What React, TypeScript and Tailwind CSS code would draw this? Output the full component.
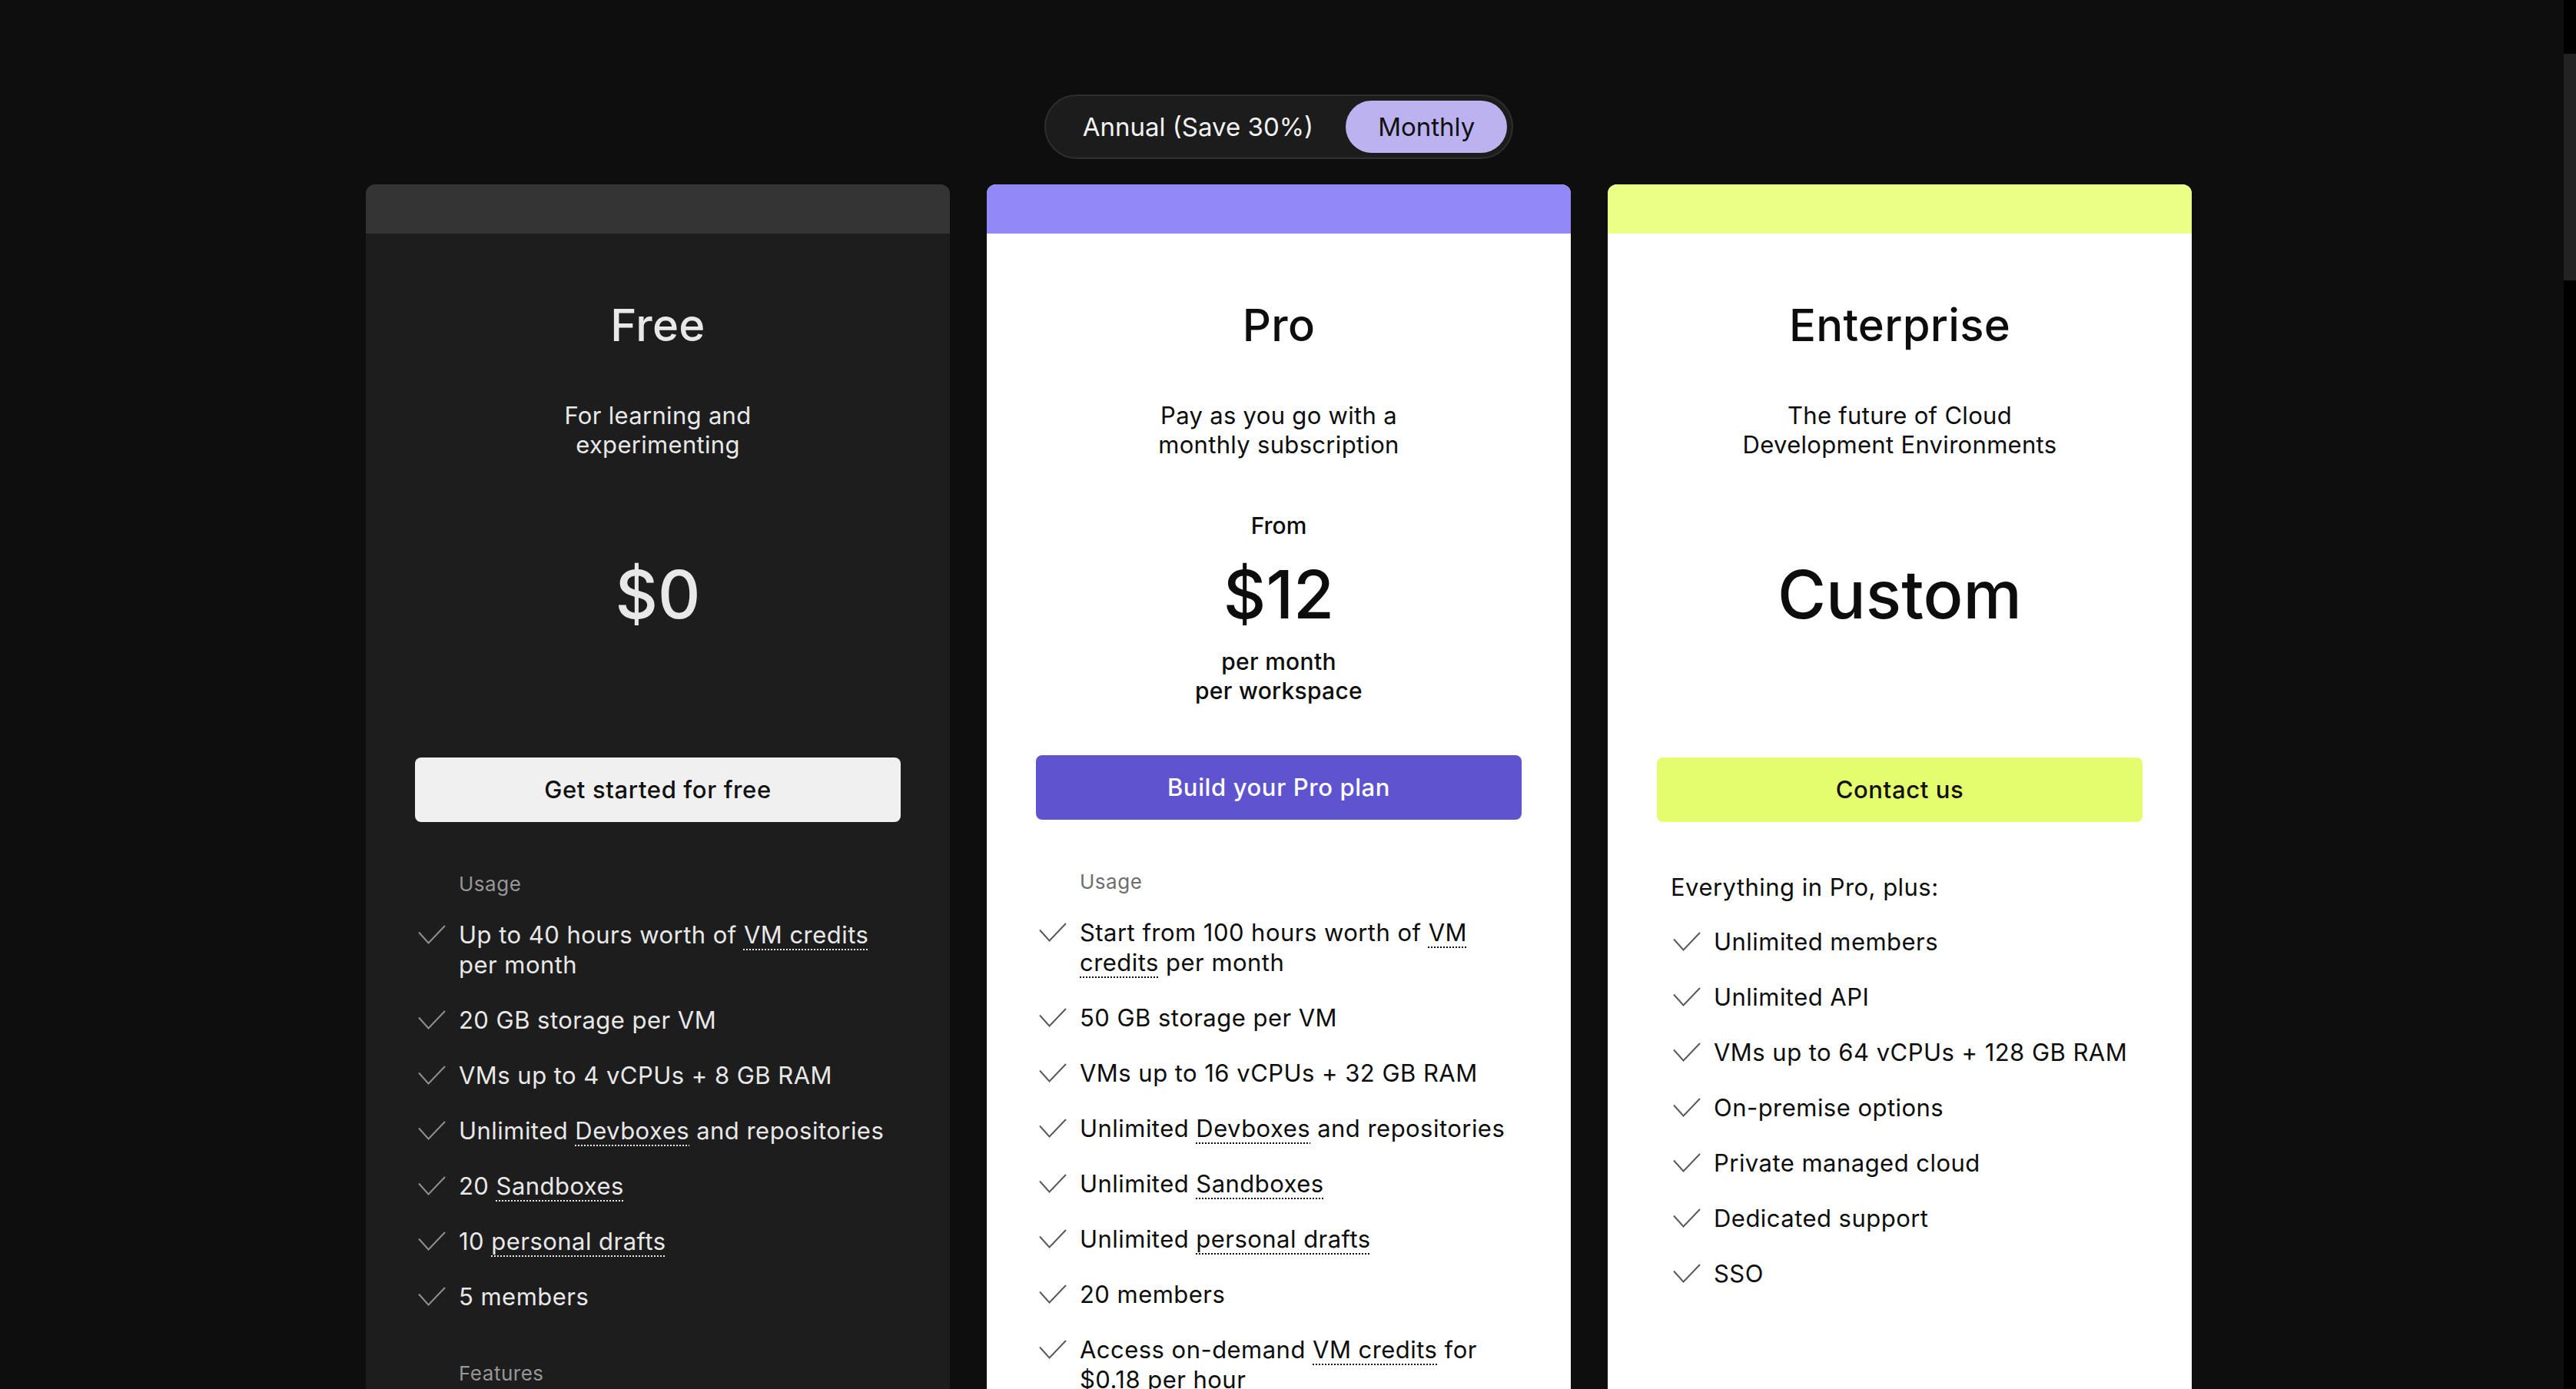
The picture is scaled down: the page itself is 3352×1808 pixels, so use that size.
import React from 'react';

type Tone = 'dark' | 'light';

const Check: React.FC<{ tone: Tone }> = ({ tone }) => (
  <svg
    viewBox="0 0 36 25"
    fill="none"
    className={`w-[36px] h-[25px] shrink-0 ${tone === 'dark' ? 'text-[#8f8f8f]' : 'text-[#5a5a5a]'}`}
  >
    <path d="M1 9.5 L13.5 23.5 L35 1" stroke="currentColor" strokeWidth={2} strokeLinejoin="miter" />
  </svg>
);

const Term: React.FC<{ children: React.ReactNode }> = ({ children }) => (
  <span className="underline decoration-dotted decoration-[2px] underline-offset-[7px]">{children}</span>
);

const Item: React.FC<{ tone: Tone; children: React.ReactNode }> = ({ tone, children }) => (
  <li className="flex gap-[17px]">
    <span className="h-[39px] flex items-center">
      <Check tone={tone} />
    </span>
    <span className="text-[31px] leading-[39px] tracking-[0.015em]">{children}</span>
  </li>
);

const Label: React.FC<{ tone: Tone; children: React.ReactNode }> = ({ tone, children }) => (
  <div
    className={`pl-[53px] text-[26px] leading-[29px] tracking-[0.02em] ${
      tone === 'dark' ? 'text-[#969696]' : 'text-[#6e6e6e]'
    }`}
  >
    {children}
  </div>
);

interface PlanProps {
  tone: Tone;
  band: string;
  body: string;
  title: string;
  subtitle: React.ReactNode;
  from?: string;
  price: string;
  suffix?: React.ReactNode;
  button: string;
  buttonClass: string;
  children: React.ReactNode;
}

const Plan: React.FC<PlanProps> = ({
  tone,
  band,
  body,
  title,
  subtitle,
  from,
  price,
  suffix,
  button,
  buttonClass,
  children,
}) => {
  const text = tone === 'dark' ? 'text-[#e8e8e8]' : 'text-[#0d0d0d]';
  return (
    <div className={`rounded-t-[12px] overflow-hidden flex flex-col ${body} ${text}`}>
      <div className={`h-[64px] ${band}`} />
      <div className="flex flex-col items-center pt-[84px] text-center">
        <h2 className="text-[58px] leading-[70px] font-medium tracking-[0.005em]">{title}</h2>
        <p className="mt-[64px] text-[31px] leading-[38px] tracking-[0.01em]">{subtitle}</p>
        <div className={`mt-[67px] flex flex-col items-center ${suffix ? '' : 'h-[256px]'}`}>
          <div className="h-[38px] text-[30px] leading-[38px] font-medium">{from}</div>
          <div className="mt-[28px] text-[86px] leading-[86px] font-medium">{price}</div>
          {suffix && (
            <div className="mt-[25px] text-[30px] leading-[38px] font-medium tracking-[0.01em]">{suffix}</div>
          )}
        </div>
      </div>
      <div className="px-[64px] mt-[65px]">
        <button
          className={`w-full h-[84px] rounded-[8px] text-[31px] font-medium tracking-[0.02em] flex items-center justify-center ${buttonClass}`}
        >
          {button}
        </button>
      </div>
      <div className="mt-[66px] pl-[68px] pr-[64px] pb-[120px]">{children}</div>
    </div>
  );
};

export default function App() {
  return (
    <div className="flex h-screen overflow-hidden bg-[#0e0e0e] font-['Inter','Noto_Sans',sans-serif] antialiased">
      <main className="flex-1 pr-[8px]">
        <div className="flex flex-col items-center pt-[123px]">
          <div className="flex rounded-full border-2 border-[#2e2e2e] bg-[#1c1c1c] p-[6px]">
            <button className="h-[68px] px-[42px] rounded-full text-[33px] leading-none text-[#f2f2f2]">
              Annual (Save 30%)
            </button>
            <button className="h-[68px] px-[42px] rounded-full bg-[#bcb2f0] text-[33px] leading-none text-[#111]">
              Monthly
            </button>
          </div>

          <div className="mt-[33px] grid grid-cols-3 gap-[48px] w-[2376px]">
            <Plan
              tone="dark"
              band="bg-[#343434]"
              body="bg-[#1d1d1d]"
              title="Free"
              subtitle={
                <>
                  For learning and
                  <br />
                  experimenting
                </>
              }
              price="$0"
              button="Get started for free"
              buttonClass="bg-[#f0f0f0] text-[#111]"
            >
              <div className="flex flex-col gap-[32px]">
                <Label tone="dark">Usage</Label>
                <ul className="flex flex-col gap-[33px]">
                  <Item tone="dark">
                    Up to 40 hours worth of <Term>VM credits</Term> per month
                  </Item>
                  <Item tone="dark">20 GB storage per VM</Item>
                  <Item tone="dark">VMs up to 4 vCPUs + 8 GB RAM</Item>
                  <Item tone="dark">
                    Unlimited <Term>Devboxes</Term> and repositories
                  </Item>
                  <Item tone="dark">
                    20 <Term>Sandboxes</Term>
                  </Item>
                  <Item tone="dark">
                    10 <Term>personal drafts</Term>
                  </Item>
                  <Item tone="dark">5 members</Item>
                </ul>
              </div>
              <div className="mt-[66px] flex flex-col gap-[32px]">
                <Label tone="dark">Features</Label>
                <ul className="flex flex-col gap-[33px]">
                  <Item tone="dark">Private and public repositories</Item>
                  <Item tone="dark">Live collaboration</Item>
                </ul>
              </div>
            </Plan>

            <Plan
              tone="light"
              band="bg-[#9388f7]"
              body="bg-white"
              title="Pro"
              subtitle={
                <>
                  Pay as you go with a
                  <br />
                  monthly subscription
                </>
              }
              from="From"
              price="$12"
              suffix={
                <>
                  per month
                  <br />
                  per workspace
                </>
              }
              button="Build your Pro plan"
              buttonClass="bg-[#5f54cf] text-white"
            >
              <div className="flex flex-col gap-[32px]">
                <Label tone="light">Usage</Label>
                <ul className="flex flex-col gap-[33px]">
                  <Item tone="light">
                    Start from 100 hours worth of <Term>VM credits</Term> per month
                  </Item>
                  <Item tone="light">50 GB storage per VM</Item>
                  <Item tone="light">VMs up to 16 vCPUs + 32 GB RAM</Item>
                  <Item tone="light">
                    Unlimited <Term>Devboxes</Term> and repositories
                  </Item>
                  <Item tone="light">
                    Unlimited <Term>Sandboxes</Term>
                  </Item>
                  <Item tone="light">
                    Unlimited <Term>personal drafts</Term>
                  </Item>
                  <Item tone="light">20 members</Item>
                  <Item tone="light">
                    Access on-demand <Term>VM credits</Term> for $0.18 per hour
                  </Item>
                </ul>
              </div>
            </Plan>

            <Plan
              tone="light"
              band="bg-[#ebff87]"
              body="bg-white"
              title="Enterprise"
              subtitle={
                <>
                  The future of Cloud
                  <br />
                  Development Environments
                </>
              }
              price="Custom"
              button="Contact us"
              buttonClass="bg-[#e4fd6e] text-[#111]"
            >
              <div className="pl-[14px] flex flex-col gap-[32px]">
                <div className="text-[31px] leading-[38px] tracking-[0.015em]">Everything in Pro, plus:</div>
                <ul className="flex flex-col gap-[33px] pl-[3px]">
                  <Item tone="light">Unlimited members</Item>
                  <Item tone="light">Unlimited API</Item>
                  <Item tone="light">VMs up to 64 vCPUs + 128 GB RAM</Item>
                  <Item tone="light">On-premise options</Item>
                  <Item tone="light">Private managed cloud</Item>
                  <Item tone="light">Dedicated support</Item>
                  <Item tone="light">SSO</Item>
                </ul>
              </div>
            </Plan>
          </div>
        </div>
      </main>
      <div className="w-[16px] bg-black">
        <div className="mt-[70px] h-[295px] bg-[#222]" />
      </div>
    </div>
  );
}
